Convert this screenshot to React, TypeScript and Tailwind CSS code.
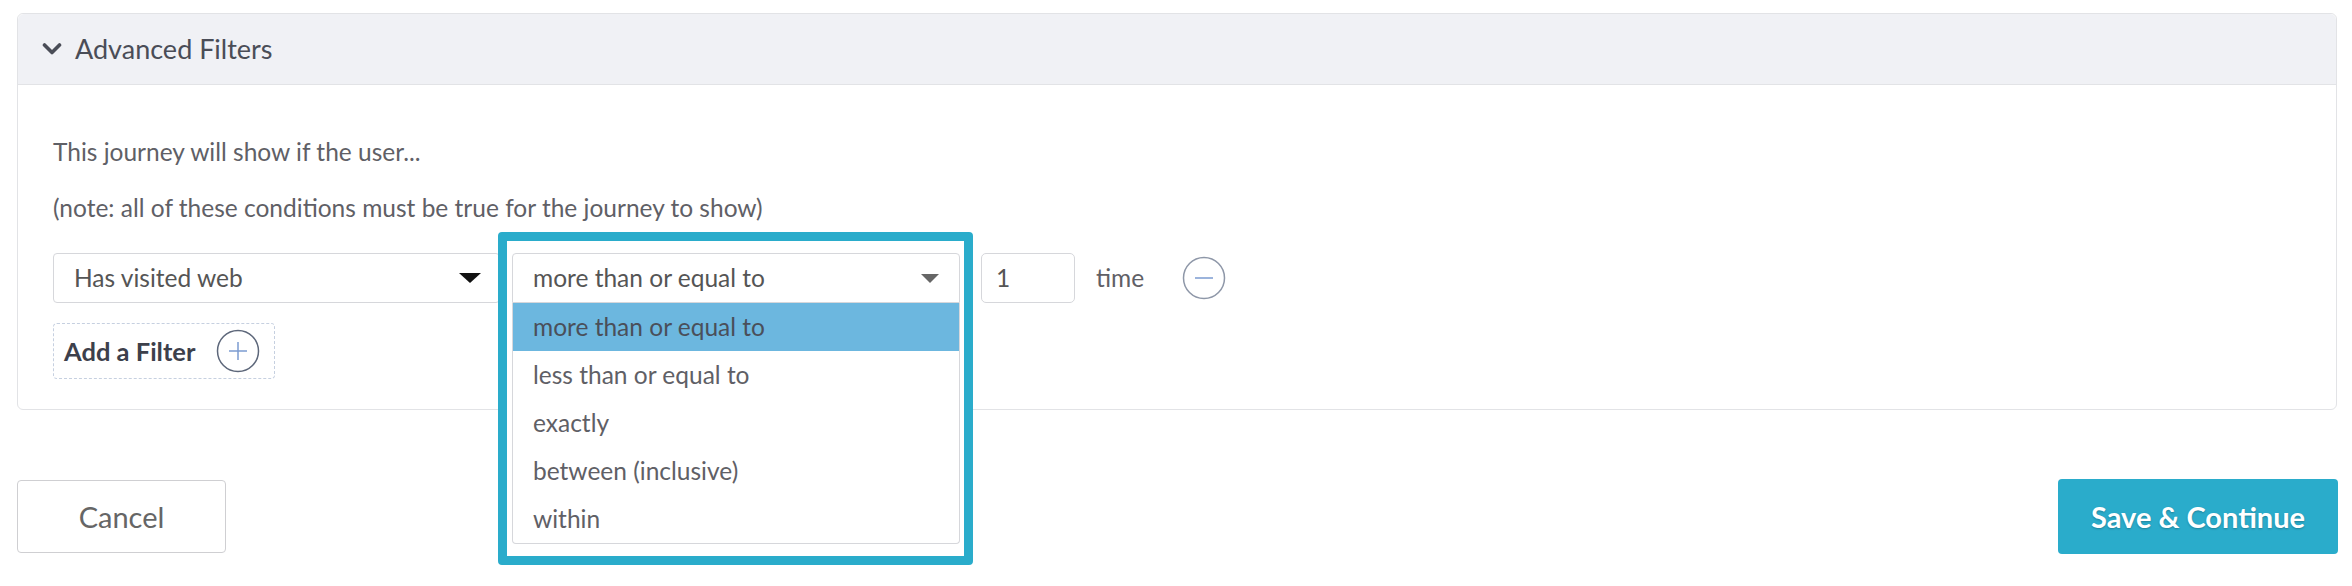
const options = [
  "more than or equal to",
  "less than or equal to",
  "exactly",
  "between (inclusive)",
  "within",
];

function Caret({ color, w, h }: { color: string; w: number; h: number }) {
  return (
    <svg width={w} height={h} viewBox={`0 0 ${w} ${h}`}>
      <polygon points={`0,0 ${w},0 ${w / 2},${h}`} fill={color} />
    </svg>
  );
}

export default function App() {
  return (
    <main className="w-[2352px] h-[586px] bg-white font-['Lato',sans-serif] text-[#5f6066]">
      {/* Advanced Filters panel */}
      <div className="pt-[13px] pl-[17px] pr-[15px]">
        <div className="rounded-[6px] border border-[#e2e3e6]">
          <div className="h-[71px] bg-[#f0f1f5] border-b border-[#e2e3e6] rounded-t-[6px] flex items-center pl-[24px] gap-[13px]">
            <svg width="20" height="12" viewBox="0 0 20 12">
              <polyline points="2.5,2 10,9.5 17.5,2" fill="none" stroke="#4a4d57" strokeWidth="3.6" strokeLinecap="round" strokeLinejoin="round" />
            </svg>
            <span className="text-[27px] text-[#4a4d57]">Advanced Filters</span>
          </div>

          <div className="pl-[35px] pt-[51px] pb-[30px]">
            <p className="text-[24.5px] leading-[32px]">This journey will show if the user...</p>
            <p className="text-[24.5px] leading-[32px] mt-[24px]">
              (note: all of these conditions must be true for the journey to show)
            </p>

            {/* Filter row */}
            <div className="flex items-center mt-[29px] h-[50px]">
              <div className="w-[447px] h-[50px] rounded-[4px] border border-[#d6d7db] flex items-center justify-between pl-[20px] pr-[18px]">
                <span className="text-[24.5px] text-[#555]">Has visited web</span>
                <Caret color="#111" w={22} h={10} />
              </div>

              <div className="relative ml-[12px]">
                <div className="absolute -left-[14px] -top-[21px] w-[475px] h-[333px] border-[9px] border-[#2aaccb] rounded-[4px] bg-white" />
                <div className="relative w-[448px] h-[50px] rounded-t-[4px] border border-[#d6d7db] flex items-center justify-between pl-[20px] pr-[20px] bg-white">
                  <span className="text-[24.5px] text-[#555]">more than or equal to</span>
                  <Caret color="#666" w={18} h={9} />
                  <div className="absolute left-[-1px] right-[-1px] top-[49px] border border-t-0 border-[#d6d7db] rounded-b-[4px] bg-white">
                    {options.map((o, i) => (
                      <div
                        key={o}
                        className={`h-[48px] flex items-center pl-[20px] text-[24.5px] ${
                          i === 0 ? "bg-[#6cb7df] text-[#4a4f5a]" : "text-[#5f6066]"
                        }`}
                      >
                        {o}
                      </div>
                    ))}
                  </div>
                </div>
              </div>

              <div className="ml-[21px] w-[94px] h-[50px] rounded-[5px] border border-[#d6d7db] flex items-center pl-[14px] text-[24.5px] text-[#555]">
                1
              </div>
              <span className="ml-[21px] text-[24.5px] text-[#5f6066]">time</span>
              <svg className="ml-[38px]" width="44" height="44" viewBox="0 0 44 44">
                <circle cx="22" cy="22" r="20.5" fill="none" stroke="#8e97a8" strokeWidth="1.5" />
                <line x1="13" y1="22" x2="31" y2="22" stroke="#7b9bd0" strokeWidth="1.5" />
              </svg>
            </div>

            <div className="mt-[20px] w-[222px] h-[56px] rounded-[4px] border-[1.5px] border-dashed border-[#c6d0e0] flex items-center pl-[10px]">
              <span className="text-[25.5px] font-bold text-[#3d404b]">Add a Filter</span>
              <svg className="ml-[21px]" width="44" height="44" viewBox="0 0 44 44">
                <circle cx="22" cy="22" r="20.5" fill="none" stroke="#5d677a" strokeWidth="1.5" />
                <line x1="13" y1="22" x2="31" y2="22" stroke="#7b9bd0" strokeWidth="1.5" />
                <line x1="22" y1="13" x2="22" y2="31" stroke="#7b9bd0" strokeWidth="1.5" />
              </svg>
            </div>
          </div>
        </div>
      </div>

      {/* Actions */}
      <div className="flex items-center justify-between pl-[17px] pr-[14px] mt-[69px]">
        <button className="w-[209px] h-[73px] rounded-[4px] border border-[#cfcfd2] bg-white text-[29px] text-[#666]">
          Cancel
        </button>
        <button className="w-[280px] h-[75px] rounded-[4px] bg-[#2aaccb] text-white text-[29px] font-bold [text-shadow:0_1px_2px_rgba(0,0,0,0.25)]">
          Save &amp; Continue
        </button>
      </div>
    </main>
  );
}
